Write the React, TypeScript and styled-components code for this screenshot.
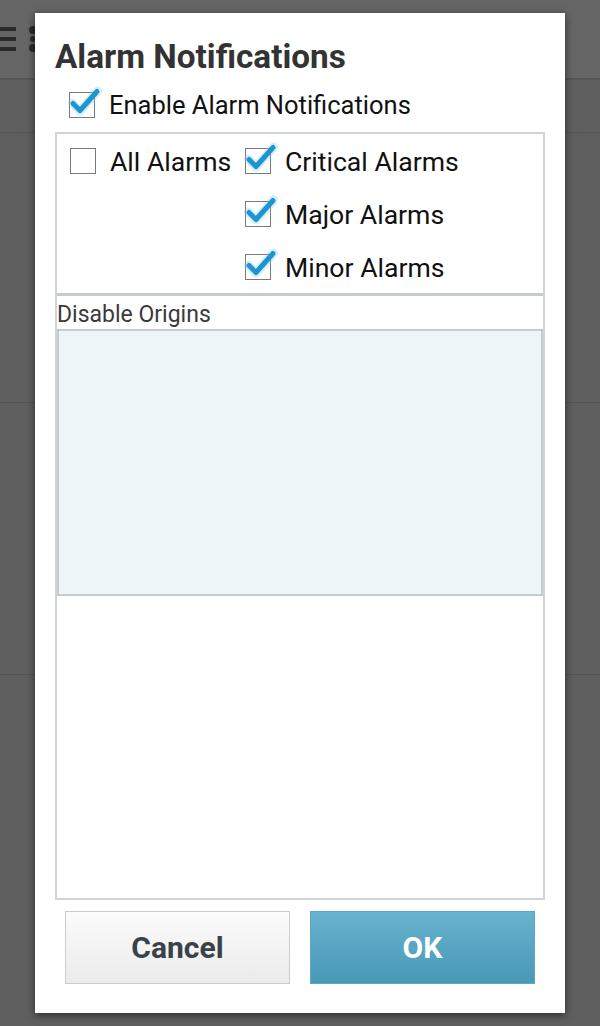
import React from "react";
import styled, { createGlobalStyle } from "styled-components";

const Global = createGlobalStyle`
  html, body { margin: 0; padding: 0; }
  body {
    width: 600px; height: 1026px; overflow: hidden;
    background: #5f5f5f;
    font-family: Roboto, "Noto Sans", "Liberation Sans", sans-serif;
  }
`;

const Page = styled.div`
  position: relative;
  width: 600px;
  height: 1026px;
  background: #5f5f5f;
`;

const TopBar = styled.div`
  height: 78px;
  background: #666666;
  border-bottom: 2px solid #555555;
  display: flex;
  align-items: center;
  gap: 12px;
`;

const ListRow = styled.div<{ $h: number }>`
  height: ${(p) => p.$h}px;
  border-bottom: 1px solid #545454;
`;

const Overlay = styled.div`
  position: absolute;
  left: 35px;
  top: 13px;
  width: 530px;
  height: 1000px;
  background: #ffffff;
  box-shadow: 0 2px 8px rgba(0, 0, 0, 0.55);
  box-sizing: border-box;
  padding: 26px 20px 0 20px;
  display: flex;
  flex-direction: column;
`;

const Title = styled.h1`
  margin: 0;
  font-size: 33.3px;
  font-weight: 700;
  color: #333333;
  line-height: 36px;
  height: 36px;
`;

const EnableRow = styled.label`
  display: flex;
  align-items: center;
  gap: 14px;
  margin: 15px 0 0 14px;
  height: 30px;
  font-size: 25.5px;
  color: #111;
`;

const Frame = styled.div`
  margin-top: 12px;
  border: 2px solid #cfd4d8;
  display: flex;
  flex-direction: column;
  height: 768px;
  box-sizing: border-box;
`;

const AlarmGroup = styled.div`
  display: grid;
  grid-template-columns: 175px 1fr;
  padding: 12px 0 0 13px;
  height: 162px;
  flex: none;
  box-sizing: border-box;
  border-bottom: 3px solid #c6cbd0;
`;

const Column = styled.div`
  display: flex;
  flex-direction: column;
  gap: 23px;
`;

const CheckRow = styled.label`
  display: flex;
  align-items: center;
  gap: 14px;
  height: 30px;
  font-size: 26.6px;
  color: #111;
  white-space: nowrap;
`;

const SectionLabel = styled.div`
  font-size: 23px;
  color: #3a3a3a;
  padding-top: 4px;
  height: 33px;
  line-height: 30px;
  box-sizing: border-box;
  flex: none;
`;

const OriginsList = styled.div`
  height: 267px;
  flex: none;
  background: #eef5f8;
  border: 2px solid #c6cbd0;
  box-sizing: border-box;
`;

const Buttons = styled.div`
  display: flex;
  gap: 20px;
  padding: 11px 10px 0 10px;
`;

const Btn = styled.button<{ $primary?: boolean }>`
  flex: 1;
  height: 73px;
  font-family: Roboto, "Noto Sans", "Liberation Sans", sans-serif;
  font-size: 30px;
  font-weight: 700;
  border: 1px solid ${(p) => (p.$primary ? "#5aa8c6" : "#cccccc")};
  color: ${(p) => (p.$primary ? "#ffffff" : "#3a4148")};
  background: ${(p) =>
    p.$primary
      ? "linear-gradient(#68b3d0, #4898b6)"
      : "linear-gradient(#fbfbfb, #ebebeb)"};
  padding: 0;
`;

const BoxWrap = styled.span`
  position: relative;
  width: 26px;
  height: 26px;
  flex: none;
`;

const Box = styled.span`
  position: absolute;
  inset: 0;
  border: 1.5px solid #7a7a7a;
  box-sizing: border-box;
  background: #fff;
`;

const Tick = styled.svg`
  position: absolute;
  left: 0;
  top: 0;
  width: 26px;
  height: 26px;
  overflow: visible;
`;

function CheckBox({ checked }: { checked: boolean }) {
  return (
    <BoxWrap>
      <Box />
      {checked && (
        <Tick viewBox="0 0 26 26">
          <path
            d="M3.5 11 L11 19 L28.5 -1"
            fill="none"
            stroke="rgba(120,200,240,0.3)"
            strokeWidth="9"
            strokeLinecap="round"
            strokeLinejoin="round"
          />
          <path
            d="M4 11.5 L11 18.5 L28 -0.5"
            fill="none"
            stroke="#1f95cf"
            strokeWidth="5"
            strokeLinecap="round"
            strokeLinejoin="round"
          />
        </Tick>
      )}
    </BoxWrap>
  );
}

const MenuIcon = styled.svg`
  width: 36px;
  height: 26px;
  flex: none;
`;

export default function App() {
  return (
    <>
      <Global />
      <Page>
        <TopBar>
          <MenuIcon viewBox="0 0 36 26">
            <rect x="0" y="1" width="16" height="4" fill="#2a2a2a" />
            <rect x="0" y="11" width="16" height="4" fill="#2a2a2a" />
            <rect x="0" y="21" width="16" height="4" fill="#2a2a2a" />
            <circle cx="33" cy="4" r="4" fill="#2a2a2a" />
            <circle cx="33" cy="13" r="3" fill="#2a2a2a" />
            <circle cx="33" cy="22" r="4" fill="#2a2a2a" />
          </MenuIcon>
        </TopBar>
        <ListRow $h={52} />
        <ListRow $h={269} />
        <ListRow $h={271} />
        <Overlay>
          <Title>Alarm Notifications</Title>
          <EnableRow>
            <CheckBox checked />
            Enable Alarm Notifications
          </EnableRow>
          <Frame>
            <AlarmGroup>
              <Column>
                <CheckRow>
                  <CheckBox checked={false} />
                  All Alarms
                </CheckRow>
              </Column>
              <Column>
                <CheckRow>
                  <CheckBox checked />
                  Critical Alarms
                </CheckRow>
                <CheckRow>
                  <CheckBox checked />
                  Major Alarms
                </CheckRow>
                <CheckRow>
                  <CheckBox checked />
                  Minor Alarms
                </CheckRow>
              </Column>
            </AlarmGroup>
            <SectionLabel>Disable Origins</SectionLabel>
            <OriginsList />
          </Frame>
          <Buttons>
            <Btn>Cancel</Btn>
            <Btn $primary>OK</Btn>
          </Buttons>
        </Overlay>
      </Page>
    </>
  );
}
